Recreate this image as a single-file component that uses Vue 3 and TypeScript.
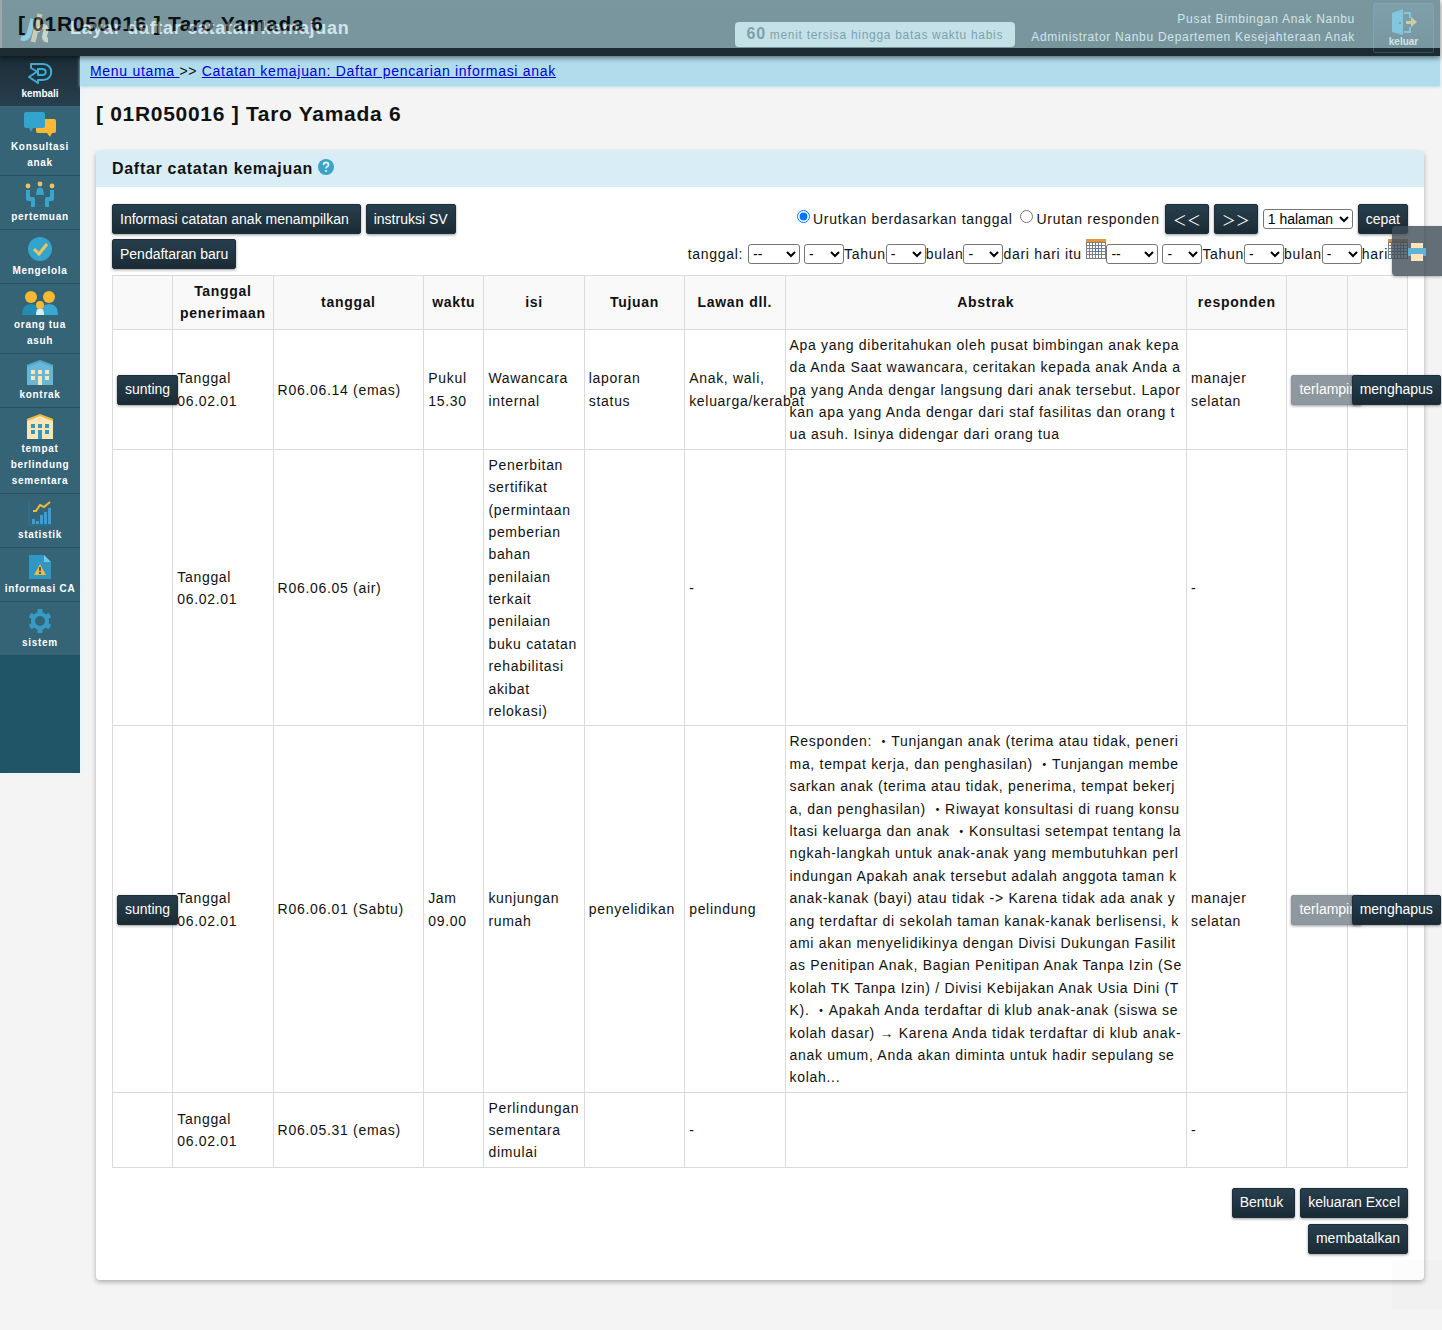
<script setup lang="ts">
import { ref } from 'vue'

interface NavItem {
  icon: string
  label: string
}

interface ProgressRecord {
  received: string
  date: string
  time: string
  content: string
  purpose: string
  partner: string
  summary: string
  staff: string
  editable: boolean
}

const childName = '[ 01R050016 ] Taro Yamada 6'

const navItems: NavItem[] = [
  { icon: 'chat', label: 'Konsultasi anak' },
  { icon: 'meeting', label: 'pertemuan' },
  { icon: 'check', label: 'Mengelola' },
  { icon: 'family', label: 'orang tua asuh' },
  { icon: 'building', label: 'kontrak' },
  { icon: 'shelter', label: 'tempat berlindung sementara' },
  { icon: 'chart', label: 'statistik' },
  { icon: 'file', label: 'informasi CA' },
  { icon: 'gear', label: 'sistem' },
]

const columns: { title: string; width: number }[] = [
  { title: '', width: 60 },
  { title: 'Tanggal penerimaan', width: 100 },
  { title: 'tanggal', width: 150 },
  { title: 'waktu', width: 60 },
  { title: 'isi', width: 100 },
  { title: 'Tujuan', width: 100 },
  { title: 'Lawan dll.', width: 100 },
  { title: 'Abstrak', width: 400 },
  { title: 'responden', width: 100 },
  { title: '', width: 60 },
  { title: '', width: 60 },
]

const records: ProgressRecord[] = [
  {
    received: 'Tanggal 06.02.01',
    date: 'R06.06.14 (emas)',
    time: 'Pukul 15.30',
    content: 'Wawancara internal',
    purpose: 'laporan status',
    partner: 'Anak, wali, keluarga/kerabat',
    summary:
      'Apa yang diberitahukan oleh pusat bimbingan anak kepada Anda Saat wawancara, ceritakan kepada anak Anda apa yang Anda dengar langsung dari anak tersebut. Laporkan apa yang Anda dengar dari staf fasilitas dan orang tua asuh. Isinya didengar dari orang tua',
    staff: 'manajer selatan',
    editable: true,
  },
  {
    received: 'Tanggal 06.02.01',
    date: 'R06.06.05 (air)',
    time: '',
    content:
      'Penerbitan sertifikat (permintaan pemberian bahan penilaian terkait penilaian buku catatan rehabilitasi akibat relokasi)',
    purpose: '',
    partner: '-',
    summary: '',
    staff: '-',
    editable: false,
  },
  {
    received: 'Tanggal 06.02.01',
    date: 'R06.06.01 (Sabtu)',
    time: 'Jam 09.00',
    content: 'kunjungan rumah',
    purpose: 'penyelidikan',
    partner: 'pelindung',
    summary:
      'Responden: ・Tunjangan anak (terima atau tidak, penerima, tempat kerja, dan penghasilan) ・Tunjangan membesarkan anak (terima atau tidak, penerima, tempat bekerja, dan penghasilan) ・Riwayat konsultasi di ruang konsultasi keluarga dan anak ・Konsultasi setempat tentang langkah-langkah untuk anak-anak yang membutuhkan perlindungan Apakah anak tersebut adalah anggota taman kanak-kanak (bayi) atau tidak -> Karena tidak ada anak yang terdaftar di sekolah taman kanak-kanak berlisensi, kami akan menyelidikinya dengan Divisi Dukungan Fasilitas Penitipan Anak, Bagian Penitipan Anak Tanpa Izin (Sekolah TK Tanpa Izin) / Divisi Kebijakan Anak Usia Dini (TK). ・Apakah Anda terdaftar di klub anak-anak (siswa sekolah dasar) → Karena Anda tidak terdaftar di klub anak-anak umum, Anda akan diminta untuk hadir sepulang sekolah...',
    staff: 'manajer selatan',
    editable: true,
  },
  {
    received: 'Tanggal 06.02.01',
    date: 'R06.05.31 (emas)',
    time: '',
    content: 'Perlindungan sementara dimulai',
    purpose: '',
    partner: '-',
    summary: '',
    staff: '-',
    editable: false,
  },
]

const dateGroups = [
  { key: 'from', suffix: 'dari hari itu ' },
  { key: 'to', suffix: 'hari' },
]

const order = ref('date')
</script>

<template>
  <div class="page">
    <header class="topbar">
      <svg class="logo" viewBox="0 0 32 32" aria-hidden="true">
        <path d="M13 7 L9 22 Q7 28 1 26" fill="none" stroke="#5cc4ea" stroke-width="5" />
        <path d="M20 2 L13 30" fill="none" stroke="#e8c07c" stroke-width="5" />
        <path d="M17 19 Q22 13 25 15 Q27 17 25 22 Q23 28 28 28" fill="none" stroke="#f2d9a8" stroke-width="5" />
      </svg>
      <p class="screen-name">Layar daftar catatan kemajuan</p>
      <p class="timer"><strong>60</strong> menit tersisa hingga batas waktu habis</p>
      <p class="account">Pusat Bimbingan Anak Nanbu<br />Administrator Nanbu Departemen Kesejahteraan Anak</p>
      <button class="logout" type="button">
        <svg width="26" height="26" viewBox="0 0 26 26" aria-hidden="true">
          <path d="M1 4 L12 0 V26 L1 23 Z" fill="#35b1dc" />
          <circle cx="9" cy="14" r="1" fill="#1d2d37" />
          <path d="M13 4 H19 V9 M19 18 V23 H13" fill="none" stroke="#35b1dc" stroke-width="2" />
          <path d="M15 12 H20 V8 L26 13 L20 18 V15 H15 Z" fill="#f4c04a" />
        </svg>
        <span>keluar</span>
      </button>
      <div class="name-strip">{{ childName }}</div>
    </header>

    <div class="body">
      <nav class="sidebar">
        <button class="back" type="button">
          <svg width="26" height="24" viewBox="0 0 26 24" aria-hidden="true">
            <path
              d="M4 3 H16 C27 3 27 19 16 19 H11 V22 L2 16 L11 10 V14 H15 C20 14 20 8 15 8 H11 V11 L4 7 Z"
              fill="none"
              stroke="#40acd2"
              stroke-width="2"
              stroke-linejoin="round"
            />
          </svg>
          <span>kembali</span>
        </button>
        <a v-for="item in navItems" :key="item.label" class="nav-item" href="#">
          <svg v-if="item.icon === 'chat'" width="34" height="28" viewBox="0 0 34 28" aria-hidden="true">
            <path d="M15 8 H31 Q33 8 33 10 V20 Q33 22 31 22 H29 L27 26 L24 22 H15 Q13 22 13 20 V10 Q13 8 15 8 Z" fill="#fab932" />
            <path d="M3 1 H20 Q22 1 22 3 V15 Q22 17 20 17 H10 L8 21 L6 17 H3 Q1 17 1 15 V3 Q1 1 3 1 Z" fill="#35a4cc" />
          </svg>
          <svg v-else-if="item.icon === 'meeting'" width="32" height="28" viewBox="0 0 32 28" aria-hidden="true">
            <g fill="#eec060">
              <circle cx="4" cy="5" r="2.4" />
              <circle cx="16" cy="3" r="2.4" />
              <circle cx="28" cy="5" r="2.4" />
            </g>
            <path
              d="M4 9 V18 H9 V26 M28 9 V18 H23 V26"
              fill="none"
              stroke="#39a5cb"
              stroke-width="4"
              stroke-linejoin="round"
            />
            <path d="M12 14 L13 8 Q16 5 19 8 L20 14 Z" fill="#39a5cb" />
          </svg>
          <svg v-else-if="item.icon === 'check'" width="28" height="28" viewBox="0 0 28 28" aria-hidden="true">
            <circle cx="14" cy="14" r="12" fill="#35a4cc" />
            <path d="M8 14 L13 19 L21 9" fill="none" stroke="#eec45c" stroke-width="3" />
          </svg>
          <svg v-else-if="item.icon === 'family'" width="36" height="28" viewBox="0 0 36 28" aria-hidden="true">
            <path d="M0 26 Q0 15 9 15 Q17 15 17 26 Z" fill="#258cb1" />
            <path d="M19 26 Q19 15 27 15 Q36 15 36 26 Z" fill="#3aa9d1" />
            <circle cx="9" cy="8" r="6" fill="#fab932" />
            <circle cx="27" cy="8" r="6" fill="#fab932" />
            <path d="M14 26 Q14 19 18 19 Q22 19 22 26 Z" fill="#d5edf6" />
            <circle cx="18" cy="16" r="4" fill="#fab932" />
          </svg>
          <svg
            v-else-if="item.icon === 'building' || item.icon === 'shelter'"
            :class="item.icon"
            width="28"
            height="28"
            viewBox="0 0 28 28"
            aria-hidden="true"
          >
            <path class="wall" d="M1 7 L14 2 L27 7 V26 H1 Z" />
            <path class="eave" d="M1 7 L14 2 L27 7" fill="none" stroke-width="2" />
            <path
              class="window"
              d="M5 11 H9 V15 H5 Z M12 11 H16 V15 H12 Z M19 11 H23 V15 H19 Z M5 17 H9 V21 H5 Z M12 17 H16 V26 H12 Z M19 17 H23 V21 H19 Z"
            />
          </svg>
          <svg v-else-if="item.icon === 'chart'" width="28" height="28" viewBox="0 0 28 28" aria-hidden="true">
            <path d="M3 3 V26 H25" fill="none" stroke="#26789a" stroke-width="1" />
            <path d="M6 20 H9 V25 H6 Z M10 22 H13 V25 H10 Z M14 16 H17 V25 H14 Z M18 13 H21 V25 H18 Z M22 9 H25 V25 H22 Z" fill="#3f9bd0" />
            <path d="M7 12 H10 L14 6 L18 8 L24 3" fill="none" stroke="#eeba3a" stroke-width="2" />
          </svg>
          <svg v-else-if="item.icon === 'file'" width="28" height="28" viewBox="0 0 28 28" aria-hidden="true">
            <path d="M3 2 H18 L25 9 V26 H3 Z" fill="#2f97c1" />
            <path d="M18 2 L25 9 H18 Z" fill="#77c2df" />
            <path d="M14 11 L20 22 H8 Z" fill="#f5b73c" />
            <path d="M14 14 V18 M14 19 V21" stroke="#44606b" stroke-width="2" />
          </svg>
          <svg v-else width="28" height="28" viewBox="0 0 28 28" aria-hidden="true">
            <path d="M14 2 V26 M4 8 L24 20 M4 20 L24 8" stroke="#359bc5" stroke-width="5" />
            <circle cx="14" cy="14" r="7" fill="#366477" stroke="#359bc5" stroke-width="4" />
          </svg>
          <span>{{ item.label }}</span>
        </a>
      </nav>

      <div class="content">
        <div class="breadcrumb"><a href="#">Menu utama </a>&gt;&gt; <a href="#">Catatan kemajuan: Daftar pencarian informasi anak</a></div>

        <main class="main">
          <h1>{{ childName }}</h1>

          <section class="card">
            <h2>
              Daftar catatan kemajuan
              <svg width="16" height="16" viewBox="0 0 16 16" role="img" aria-label="Bantuan">
                <circle cx="8" cy="8" r="8" fill="#3aa3c6" />
                <path d="M5.5 6 Q5.5 3.5 8 3.5 Q10.5 3.5 10.5 5.7 Q10.5 7 9 7.8 Q8 8.4 8 9.6" fill="none" stroke="#e2f3f9" stroke-width="1.8" />
                <circle cx="8" cy="12" r="1.1" fill="#e2f3f9" />
              </svg>
            </h2>

            <div class="card-body">
              <div class="tools">
                <div class="group">
                  <button class="btn" type="button">Informasi catatan anak menampilkan&nbsp;</button>
                  <button class="btn" type="button">instruksi SV</button>
                </div>
                <div class="group">
                  <div class="orders">
                    <label><input v-model="order" type="radio" name="order" value="date" />Urutkan berdasarkan tanggal</label>
                    <label><input v-model="order" type="radio" name="order" value="staff" />Urutan responden</label>
                  </div>
                  <button class="btn" type="button" aria-label="Halaman sebelumnya">＜＜</button>
                  <button class="btn" type="button" aria-label="Halaman berikutnya">＞＞</button>
                  <select class="page-select" aria-label="Halaman">
                    <option>1 halaman</option>
                  </select>
                  <button class="btn" type="button">cepat</button>
                </div>
              </div>

              <div class="tools second">
                <button class="btn" type="button">Pendaftaran baru</button>
                <div class="dates">
                  <span class="dates-label">tanggal:</span>
                  <div v-for="group in dateGroups" :key="group.key" class="date-group">
                    <select class="era" aria-label="Era"><option>--</option></select>
                    <select :id="group.key + '-year'" class="part"><option>-</option></select>
                    <label :for="group.key + '-year'">Tahun</label>
                    <select :id="group.key + '-month'" class="part"><option>-</option></select>
                    <label :for="group.key + '-month'">bulan</label>
                    <select :id="group.key + '-day'" class="part"><option>-</option></select>
                    <label class="suffix" :for="group.key + '-day'">{{ group.suffix }}</label>
                    <button class="calendar" type="button" aria-label="Kalender">
                      <svg width="20" height="20" viewBox="0 0 20 20" aria-hidden="true">
                        <path d="M0 0 H20 V20 H0 Z" fill="#7c7c84" />
                        <path d="M0 0 H20 V3 H0 Z" fill="#e2963c" />
                        <path
                          d="M1 4h2v2h-2z M4 4h2v2h-2z M7 4h2v2h-2z M10 4h2v2h-2z M13 4h2v2h-2z M16 4h3v2h-3z M1 7h2v2h-2z M4 7h2v2h-2z M7 7h2v2h-2z M10 7h2v2h-2z M13 7h2v2h-2z M16 7h3v2h-3z M1 10h2v2h-2z M4 10h2v2h-2z M7 10h2v2h-2z M10 10h2v2h-2z M13 10h2v2h-2z M16 10h3v2h-3z M1 13h2v2h-2z M4 13h2v2h-2z M7 13h2v2h-2z M10 13h2v2h-2z M13 13h2v2h-2z M16 13h3v2h-3z M1 16h2v3h-2z M4 16h2v3h-2z M7 16h2v3h-2z M10 16h2v3h-2z M13 16h2v3h-2z M16 16h3v3h-3z"
                          fill="#ffffff"
                        />
                        <path d="M9.5 9.5 H12.5 V12.5 H9.5 Z" fill="#ffffff" stroke="#2f6fc8" />
                      </svg>
                    </button>
                  </div>
                </div>
              </div>

              <table>
                <colgroup>
                  <col v-for="(column, i) in columns" :key="i" :style="{ width: column.width + 'px' }" />
                </colgroup>
                <thead>
                  <tr>
                    <th v-for="(column, i) in columns" :key="i" scope="col">{{ column.title }}</th>
                  </tr>
                </thead>
                <tbody>
                  <tr v-for="record in records" :key="record.date">
                    <td><button v-if="record.editable" class="btn" type="button">sunting</button></td>
                    <td>{{ record.received }}</td>
                    <td>{{ record.date }}</td>
                    <td>{{ record.time }}</td>
                    <td>{{ record.content }}</td>
                    <td>{{ record.purpose }}</td>
                    <td>{{ record.partner }}</td>
                    <td class="summary">{{ record.summary }}</td>
                    <td>{{ record.staff }}</td>
                    <td><button v-if="record.editable" class="btn" type="button" disabled>terlampir</button></td>
                    <td><button v-if="record.editable" class="btn" type="button">menghapus</button></td>
                  </tr>
                </tbody>
              </table>

              <div class="actions">
                <div class="group">
                  <button class="btn" type="button">Bentuk&nbsp;</button>
                  <button class="btn" type="button">keluaran Excel</button>
                </div>
                <button class="btn" type="button">membatalkan</button>
              </div>
            </div>
          </section>
        </main>
      </div>
    </div>

    <button class="print" type="button" aria-label="Cetak">
      <svg width="20" height="20" viewBox="0 0 20 20" aria-hidden="true">
        <path d="M4 1 H16 V8 H4 Z" fill="#fbe3bd" />
        <path d="M1 6 H19 V14 H1 Z" fill="#5fb4d6" />
        <path d="M4 12 H16 V19 H4 Z" fill="#fbe3bd" />
      </svg>
    </button>
    <div class="to-top"></div>
  </div>
</template>

<style>
body {
  margin: 0;
  background: #f4f4f4;
}
</style>

<style scoped>
.page {
  position: relative;
  overflow-x: hidden;
  min-height: 100vh;
  background: #f4f4f4;
  color: #111;
  font-family: "Liberation Sans", Arial, "Noto Sans CJK JP", sans-serif;
  font-size: 14px;
  line-height: 1.6;
  letter-spacing: 0.05em;
}

p,
h1,
h2 {
  margin: 0;
}

button {
  font-family: inherit;
  cursor: pointer;
}

.topbar {
  position: relative;
  z-index: 2;
  display: flex;
  align-items: center;
  box-sizing: border-box;
  height: 56px;
  margin-right: 2px;
  padding: 0 6px 0 20px;
  background: linear-gradient(#1f3038, #1c2a31);
  box-shadow: 0 2px 5px rgba(0, 0, 0, 0.5);
  color: #fff;
}

.logo {
  width: 32px;
  height: 32px;
}

.screen-name {
  margin: 0 auto 0 18px;
  font-size: 18px;
  font-weight: bold;
  line-height: 24px;
}

.timer {
  margin-top: 12px;
  padding: 0 12px;
  border-radius: 4px;
  background: #e4f4fa;
  color: #1f4a5c;
  font-size: 12px;
  line-height: 23px;
}

.timer strong {
  font-size: 16px;
}

.account {
  margin: 0 18px 0 16px;
  font-size: 12px;
  line-height: 18px;
  text-align: right;
}

.logout {
  display: flex;
  flex-direction: column;
  align-items: center;
  width: 61px;
  height: 50px;
  padding: 5px 0 0;
  border: 1px solid #35505f;
  border-radius: 2px;
  background: linear-gradient(#2c4858, #1d2d37);
  color: #fff;
  font-size: 10px;
  font-weight: bold;
  line-height: 14px;
}

.name-strip {
  position: absolute;
  top: 0;
  left: 0;
  right: 0;
  box-sizing: border-box;
  padding-left: 16px;
  border-left: 2px solid #e4f4fa;
  background: #b2d6de;
  color: #000;
  font-size: 21px;
  font-weight: bold;
  line-height: 48px;
  opacity: 0.62;
}

.body {
  display: flex;
  align-items: flex-start;
}

.sidebar {
  flex: none;
  display: flex;
  flex-direction: column;
  width: 80px;
  padding-bottom: 117px;
  background: #205567;
  box-shadow: 2px 0 6px #e6f4fa;
}

.back {
  display: flex;
  flex-direction: column;
  align-items: center;
  height: 50px;
  padding: 5px 0 0;
  border: 0;
  background: linear-gradient(#1c2d36, #273f4e);
  color: #fff;
  font-size: 10px;
  font-weight: bold;
  line-height: 18px;
}

.nav-item {
  display: flex;
  flex-direction: column;
  align-items: center;
  padding: 5px 2px 4px;
  border-bottom: 1px solid #285061;
  background: #366477;
  color: #fff;
  font-size: 10px;
  font-weight: bold;
  line-height: 16px;
  text-align: center;
  text-decoration: none;
}

.building .wall {
  fill: #69b7d8;
}

.building .eave {
  stroke: #56a8cb;
}

.building .window,
.shelter .wall {
  fill: #fbe6ba;
}

.shelter .eave {
  stroke: #f0b840;
}

.shelter .window {
  fill: #3597ba;
}

.content {
  flex: 1;
  min-width: 0;
}

.breadcrumb {
  margin-right: 2px;
  padding: 0 10px;
  background: #b1dcec;
  box-shadow: 0 1px 3px #b1dcec;
  line-height: 30px;
}

.breadcrumb a {
  color: #0000d8;
}

.main {
  padding: 12px 18px 50px 16px;
}

h1 {
  font-size: 21px;
  line-height: 32px;
}

.card {
  margin-top: 21px;
  border-radius: 4px;
  background: #fff;
  box-shadow: 0 2px 5px rgba(0, 0, 0, 0.3);
}

h2 {
  display: flex;
  align-items: center;
  gap: 5px;
  padding: 0 16px;
  background: #d9edf7;
  font-size: 16px;
  line-height: 36px;
}

h2 svg {
  margin-bottom: 4px;
}

.card-body {
  padding: 17px 16px 26px;
}

.tools {
  display: flex;
  justify-content: space-between;
  align-items: center;
}

.second {
  margin: 5px 0 6px;
}

.group {
  display: flex;
  align-items: center;
  gap: 5px;
}

.btn {
  flex: none;
  height: 30px;
  padding: 0 7px 1px;
  border: 1px solid #1d2e38;
  border-radius: 2px;
  background: linear-gradient(#273f4d, #1b2b35);
  box-shadow: 0 1px 3px rgba(0, 0, 0, 0.4);
  color: #fff;
  font-size: 14px;
  white-space: nowrap;
}

.btn:disabled {
  border-color: #8b969c;
  background: #8e989e;
}

.orders {
  display: flex;
  gap: 8px;
}

.orders label {
  display: flex;
  align-items: center;
}

.orders input {
  width: 13px;
  height: 13px;
  margin: 0 3px 4px 0;
}

select {
  box-sizing: border-box;
  height: 20px;
  padding: 0;
  border: 1px solid #767676;
  border-radius: 3px;
  background-color: #fff;
  color: #000;
  font-family: inherit;
  font-size: 14px;
}

.page-select {
  width: 90px;
}

.dates,
.date-group {
  display: flex;
  align-items: center;
}

.dates-label {
  margin-right: 5px;
}

.era {
  width: 52px;
  margin-right: 4px;
}

.part {
  width: 40px;
}

.suffix {
  white-space: pre;
}

.calendar {
  display: flex;
  margin-bottom: 10px;
  padding: 0;
  border: 0;
  background: none;
}

table {
  width: 100%;
  table-layout: fixed;
  border-collapse: collapse;
}

th,
td {
  padding: 4px;
  border: 1px solid #d8dcdf;
}

td {
  padding-bottom: 3px;
}

th {
  background: #f9f9f9;
}

td .btn {
  position: relative;
}

.summary {
  word-break: break-all;
}

.actions {
  display: flex;
  flex-direction: column;
  align-items: flex-end;
  gap: 6px;
  margin-top: 20px;
}

.print {
  position: absolute;
  top: 226px;
  right: 0;
  z-index: 3;
  width: 50px;
  height: 50px;
  padding: 5px 0 0;
  border: 0;
  border-radius: 4px 0 0 4px;
  background: rgba(62, 76, 88, 0.8);
  box-shadow: 0 1px 3px rgba(0, 0, 0, 0.3);
}

.to-top {
  position: absolute;
  right: 0;
  bottom: 20px;
  width: 50px;
  height: 50px;
  background: rgba(0, 0, 0, 0.01);
}
</style>
